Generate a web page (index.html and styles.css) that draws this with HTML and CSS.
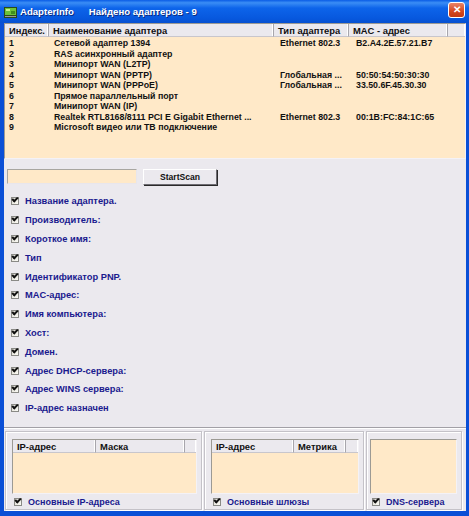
FILE: index.html
```html
<!DOCTYPE html>
<html lang="ru">
<head>
  <meta charset="UTF-8" />
  <title>AdapterInfo</title>
  <link rel="stylesheet" href="styles.css">
</head>
<body>

<div class="window">
  <div class="titlebar">
    <svg class="app-icon" width="13" height="11" viewBox="0 0 13 11">
      <rect x="0" y="0" width="13" height="11" fill="#2a4a1a"/>
      <rect x="1" y="1" width="11" height="7" fill="#6cc23a"/>
      <rect x="2" y="2" width="4" height="2" fill="#c8f08a"/>
      <rect x="7" y="4" width="4" height="3" fill="#3f8f1f"/>
      <rect x="1" y="9" width="11" height="1" fill="#9a9a9a"/>
    </svg>
    <span class="app-name">AdapterInfo</span>
    <span class="app-status">Найдено адаптеров - 9</span>
    <button class="close-btn">&#x2715;</button>
  </div>

  <div class="client">
    <div class="listview main-list">
      <div class="lv-head">
        <div class="col c-idx">Индекс.</div>
        <div class="col c-name">Наименование адаптера</div>
        <div class="col c-type">Тип адаптера</div>
        <div class="col c-mac">MAC - адрес</div>
        <div class="col c-rest"></div>
      </div>
      <div class="lv-body" id="adapters"></div>
    </div>

    <div class="scan-row">
      <input class="scan-input" type="text">
      <button class="scan-btn">StartScan</button>
    </div>

    <div class="checks" id="checks"></div>

    <div class="separator"></div>

    <div class="groups">
      <div class="group g-ip">
        <div class="listview small-list">
          <div class="lv-head">
            <div class="col g1a">IP-адрес</div>
            <div class="col g1b">Маска</div>
            <div class="col c-rest"></div>
          </div>
        </div>
        <label class="chk small"><span class="box"></span>Основные IP-адреса</label>
      </div>
      <div class="group g-gw">
        <div class="listview small-list">
          <div class="lv-head">
            <div class="col g2a">IP-адрес</div>
            <div class="col g2b">Метрика</div>
            <div class="col c-rest"></div>
          </div>
        </div>
        <label class="chk small"><span class="box"></span>Основные шлюзы</label>
      </div>
      <div class="group g-dns">
        <div class="listview small-list"></div>
        <label class="chk small"><span class="box"></span>DNS-сервера</label>
      </div>
    </div>
  </div>
</div>

<script>
  const adapters = [
    ["1", "Сетевой адаптер 1394", "Ethernet 802.3", "B2.A4.2E.57.21.B7"],
    ["2", "RAS асинхронный адаптер", "", ""],
    ["3", "Минипорт WAN (L2TP)", "", ""],
    ["4", "Минипорт WAN (PPTP)", "Глобальная ...", "50:50:54:50:30:30"],
    ["5", "Минипорт WAN (PPPoE)", "Глобальная ...", "33.50.6F.45.30.30"],
    ["6", "Прямое параллельный порт", "", ""],
    ["7", "Минипорт WAN (IP)", "", ""],
    ["8", "Realtek RTL8168/8111 PCI E Gigabit Ethernet ...", "Ethernet 802.3", "00:1B:FC:84:1C:65"],
    ["9", "Microsoft видео или ТВ подключение", "", ""]
  ];

  const body = document.getElementById("adapters");
  adapters.forEach(a => {
    const row = document.createElement("div");
    row.className = "lv-row";
    row.innerHTML =
      `<span class="c-idx">${a[0]}</span>` +
      `<span class="c-name">${a[1]}</span>` +
      `<span class="c-type">${a[2]}</span>` +
      `<span class="c-mac">${a[3]}</span>`;
    body.appendChild(row);
  });

  const fields = [
    "Название адаптера.", "Производитель:", "Короткое имя:", "Тип",
    "Идентификатор PNP.", "MAC-адрес:", "Имя компьютера:", "Хост:",
    "Домен.", "Адрес DHCP-сервера:", "Адрес WINS сервера:", "IP-адрес назначен"
  ];

  const checks = document.getElementById("checks");
  fields.forEach(f => {
    const item = document.createElement("label");
    item.className = "chk";
    item.innerHTML = `<span class="box"></span>${f}`;
    checks.appendChild(item);
  });
</script>

</body>
</html>
```

FILE: styles.css
```css
body {
  margin: 0;
  padding: 0;
  font-family: 'Liberation Sans', Arial, sans-serif;
  background: #ffffff;
}

.window {
  width: 469px;
  height: 516px;
  box-sizing: border-box;
  display: flex;
  flex-direction: column;
  background: #0a4fd6;
}

.titlebar {
  height: 23px;
  flex: none;
  display: flex;
  align-items: center;
  padding: 0 4px;
  background: linear-gradient(#0a5ce6 0%, #3a8df5 12%, #0d64ea 35%, #0758de 80%, #0650d0 100%);
  color: #fff;
  font-weight: bold;
  font-size: 9.6px;
  text-shadow: 1px 1px 0 #0a2a80;
}

.app-icon {
  margin: 1px 3px 0 0;
}

.app-status {
  margin-left: 15px;
}

.close-btn {
  margin-left: auto;
  width: 17px;
  height: 16px;
  padding: 0;
  border: 1px solid #fff;
  border-radius: 3px;
  background: linear-gradient(#e8846a, #d4471e 60%, #c23a14);
  color: #fff;
  font-size: 10px;
  font-weight: bold;
  line-height: 14px;
  margin-top: -3px;
}

.client {
  flex: 1;
  margin: 0 3px 5px 4px;
  background: #ebe9ee;
  display: flex;
  flex-direction: column;
}

/* list views */
.listview {
  background: #ffe9c8;
  border: 1px solid #9c9a94;
  border-right-color: #f4f2f6;
  border-bottom-color: #f4f2f6;
  box-sizing: border-box;
}

.lv-head {
  display: flex;
  height: 13px;
  background: #ebe9ee;
  font-size: 9.4px;
  font-weight: bold;
  line-height: 13px;
  color: #111;
}

.lv-head .col {
  box-sizing: border-box;
  padding-left: 4px;
  border-right: 1px solid #a8a6ac;
  border-bottom: 1px solid #c8c6cc;
  box-shadow: inset -1px 0 0 #fff;
  white-space: nowrap;
  overflow: hidden;
}

.lv-head .c-rest {
  flex: 1;
  border-right: none;
}

.main-list {
  height: 136px;
  flex: none;
}

.main-list .c-idx { width: 44px; }
.main-list .c-name { width: 225px; }
.main-list .c-type { width: 75px; }
.main-list .c-mac { width: 99px; }

.lv-body {
  padding-top: 1px;
}

.lv-row {
  display: flex;
  height: 10.5px;
  line-height: 10.5px;
  font-size: 8.8px;
  font-weight: bold;
  color: #111;
  white-space: nowrap;
}

.lv-row span {
  box-sizing: border-box;
  padding-left: 4px;
  overflow: hidden;
}

.lv-row .c-name { padding-left: 5px; }
.lv-row .c-type { padding-left: 6px; }
.lv-row .c-mac { padding-left: 7px; }

/* scan controls */
.scan-row {
  display: flex;
  gap: 6px;
  padding: 10px 0 0 3px;
  height: 16px;
}

.scan-input {
  width: 130px;
  height: 15px;
  box-sizing: border-box;
  margin: 0;
  background: #ffe9c8;
  border: 1px solid #a8a6a0;
  border-right-color: #e8e6ec;
  border-bottom-color: #e8e6ec;
}

.scan-btn {
  width: 74px;
  height: 16px;
  padding: 0;
  margin: 0;
  font-family: inherit;
  font-size: 8.6px;
  font-weight: bold;
  color: #111;
  background: #ebe9ee;
  border: 1px solid #fff;
  border-right-color: #6e6c72;
  border-bottom-color: #6e6c72;
  box-shadow: 1px 1px 0 #2a2a2a;
}

/* checkbox column */
.checks {
  display: flex;
  flex-direction: column;
  padding: 7px 0 0 7px;
}

.chk {
  display: flex;
  align-items: center;
  height: 18.8px;
  font-size: 9.3px;
  font-weight: bold;
  color: #1a1a8e;
  white-space: nowrap;
}

.box {
  position: relative;
  width: 6px;
  height: 6px;
  margin-right: 6px;
  border: 1px solid #8a8a86;
  background: linear-gradient(135deg, #d8d6ce, #fdfcf6);
  flex: none;
}

.box::after {
  content: "";
  position: absolute;
  left: 0;
  top: -1px;
  width: 4px;
  height: 2px;
  border-left: 2px solid #111;
  border-bottom: 2px solid #111;
  transform: rotate(-45deg);
}

.separator {
  margin-top: auto;
  height: 0;
  border-top: 1px solid #a2a0a6;
  border-bottom: 1px solid #fff;
}

/* bottom group boxes */
.groups {
  display: flex;
  gap: 2px;
  padding: 2px 1px 1px 1px;
  height: 82px;
  box-sizing: border-box;
}

.group {
  box-sizing: border-box;
  border: 1px solid #c4c2c8;
  box-shadow: inset 1px 1px 0 #fff, 1px 1px 0 #fff;
  padding: 7px 4px 0 6px;
  display: flex;
  flex-direction: column;
}

.g-ip { width: 197px; }
.g-gw { width: 160px; }
.g-dns { width: 96px; padding-left: 3px; }

.small-list {
  height: 55px;
}

.g1a { width: 83px; }
.g1b { width: 89px; }
.g2a { width: 82px; }
.g2b { width: 52px; }

.chk.small {
  height: 14px;
  margin-top: 1px;
  padding-left: 2px;
  font-size: 9px;
}
```
